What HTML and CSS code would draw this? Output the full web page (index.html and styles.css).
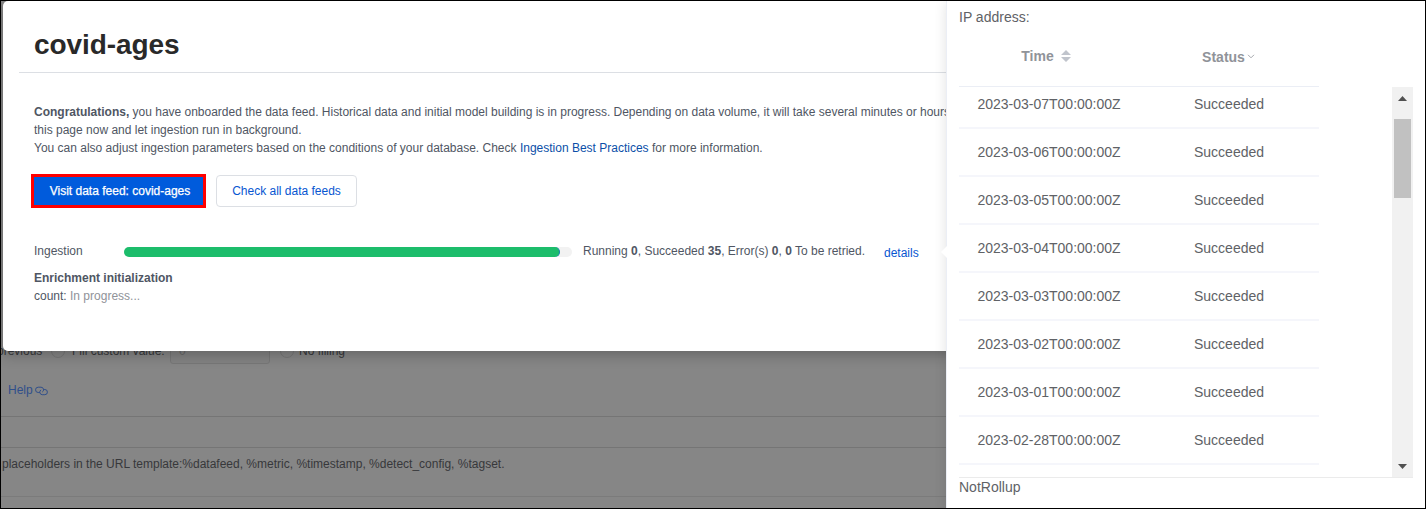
FILE: index.html
```html
<!DOCTYPE html>
<html lang="en">
<head>
<meta charset="utf-8">
<title>covid-ages</title>
<link rel="stylesheet" href="styles.css">
</head>
<body>
<div class="app">
  <main class="page">
    <div class="fill-row">
      <span class="previous">previous</span>
      <span class="radio"></span>
      <span class="fill-label">Fill custom value:</span>
      <span class="fill-input">0</span>
      <span class="radio"></span>
      <span class="no-fill">No filling</span>
    </div>
    <a class="help"><span>Help</span>
      <svg width="13" height="10" viewBox="0 0 13 10" fill="none" stroke="currentColor" stroke-width="1"><path d="M4.800 6.500H3.200A2.600 2.600 0 0 1 3.200 1.200H6A2.600 2.600 0 0 1 7.200 6.100M8.600 3.500H9.800A2.600 2.600 0 0 1 9.800 8.700H7.200A2.600 2.600 0 0 1 6 3.900"/></svg>
    </a>
    <div class="section-gap"></div>
    <div class="hint"><span>placeholders in the URL template:%datafeed, %metric, %timestamp, %detect_config, %tagset.</span></div>
  </main>

  <section class="modal">
    <h1 class="title"><span>covid-ages</span></h1>
    <div class="content">
      <div class="message">
        <div class="line-a"><b>Congratulations,</b> you have onboarded the data feed. Historical data and initial model building is in progress. Depending on data volume, it will take several minutes or hours.</div>
        <div class="line-b">this page now and let ingestion run in background.</div>
        <div class="line-c">You can also adjust ingestion parameters based on the conditions of your database. Check <a>Ingestion Best Practices</a> for more information.</div>
      </div>
      <div class="actions">
        <button class="btn primary"><span>Visit data feed: covid-ages</span></button>
        <button class="btn"><span>Check all data feeds</span></button>
      </div>
      <div class="ingestion">
        <span class="ing-label">Ingestion</span>
        <div class="track"><div class="bar"></div></div>
        <span class="counts">Running <b>0</b>, Succeeded <b>35</b>, Error(s) <b>0</b>, <b>0</b> To be retried.</span>
        <a class="details">details</a>
      </div>
      <div class="enrich"><b>Enrichment initialization</b></div>
      <div class="count">count: <span>In progress...</span></div>
    </div>
  </section>

  <aside class="popover">
    <svg class="arrow" width="6" height="12" viewBox="0 0 6 12"><path d="M6 0L0 6l6 6z" fill="#fff"/></svg>
    <div class="ip">IP address:</div>
    <div class="thead">
      <div class="th"><span>Time</span><svg class="sort" width="10" height="12" viewBox="0 0 10 12" fill="#c0c4cc"><path d="M0 5l5-5 5 5zM0 7h10l-5 5z"/></svg></div>
      <div class="th status"><span>Status</span><svg width="8" height="5" viewBox="0 0 8 5" fill="none" stroke="#a5a8ad"><path d="M1 .8l3 3 3-3"/></svg></div>
    </div>
    <div class="viewport">
      <div class="rows">
        <div class="row"><span>2023-03-07T00:00:00Z</span><span>Succeeded</span></div>
        <div class="row"><span>2023-03-06T00:00:00Z</span><span>Succeeded</span></div>
        <div class="row"><span>2023-03-05T00:00:00Z</span><span>Succeeded</span></div>
        <div class="row"><span>2023-03-04T00:00:00Z</span><span>Succeeded</span></div>
        <div class="row"><span>2023-03-03T00:00:00Z</span><span>Succeeded</span></div>
        <div class="row"><span>2023-03-02T00:00:00Z</span><span>Succeeded</span></div>
        <div class="row"><span>2023-03-01T00:00:00Z</span><span>Succeeded</span></div>
        <div class="row"><span>2023-02-28T00:00:00Z</span><span>Succeeded</span></div>
      </div>
      <div class="scrollbar">
        <svg width="9" height="5" viewBox="0 0 9 5"><path d="M0 5l4.500-5L9 5z" fill="#505050"/></svg>
        <div class="thumb"></div>
        <svg class="down" width="9" height="5" viewBox="0 0 9 5"><path d="M0 0h9L4.500 5z" fill="#505050"/></svg>
      </div>
    </div>
    <div class="rollup">NotRollup</div>
  </aside>
</div>
</body>
</html>
```
FILE: styles.css
```css
* { box-sizing: border-box; }
body { margin: 0; font: 12px/18px "Liberation Sans", Arial, sans-serif; color: #4f5663; }
.app { position: relative; width: 1426px; height: 509px; border: 1px solid #000; overflow: hidden; background: #868686; }
.page { color: #37383b; padding-top: 336px; width: 946px; white-space: nowrap; }
.fill-row { display: flex; align-items: center; height: 27px; }
.previous { width: 43px; margin-left: -4px; margin-right: 11px; }
.radio { width: 14px; height: 14px; border: 1px solid #777; border-radius: 50%; flex: none; }
.fill-label { width: 98px; margin-left: 7px; }
.fill-input { width: 100px; height: 27px; border: 1px solid #777; border-radius: 3px; padding: 4px 8px; color: #686868; margin-right: 10px; background: #838383; }
.no-fill { margin-left: 5px; }
.help { display: flex; align-items: center; gap: 2px; height: 18px; margin: 17px 0 0 7px; color: #304f8b; }
.help svg { margin-top: 2px; }
.section-gap { height: 32px; margin-top: 17px; border: solid #757575; border-width: 1px 0; }
.hint { height: 49px; padding: 7px 0 0 1px; border-bottom: 1px solid #7b7b7b; }

.modal { position: absolute; left: 2px; top: 0; width: 1100px; height: 350px; background: #fff; border-radius: 5px; box-shadow: 0 4px 14px rgba(0,0,0,.25); white-space: nowrap; }
.title { margin: 0 0 0 16px; height: 72px; padding: 28px 0 0 15px; font-size: 28px; line-height: 32px; letter-spacing: -.08px; color: #292929; border-bottom: 1px solid #dcdfe4; }
.content { padding: 30px 0 0 31px; }
.modal a { color: #0756d1; }
.message a { color: #0b4fa8; }
.line-a { letter-spacing: -.007px; }
.actions { display: flex; align-items: center; gap: 10px; margin: 17px 0 0 -3px; }
.btn { height: 32px; width: 141px; background: #fff; border: 1px solid #dcdfe4; border-radius: 4px; font: inherit; color: #0756d1; padding: 0; }
.primary { width: 175px; height: 34px; border: 3px solid #f00; border-radius: 0; background: #005bdc; color: #fff; padding-left: 3px; -webkit-text-stroke: .25px #fff; }
.ingestion { display: flex; align-items: center; height: 18px; margin-top: 34px; }
.ing-label { width: 90px; }
.track { width: 448px; height: 10px; border-radius: 5px; background: #f2f2f2; margin-top: 2px; }
.bar { width: 436px; height: 10px; border-radius: 5px; background: #1cbd6b; border-right: 1px solid #187fb1; }
.counts { width: 301px; margin-left: 11px; }
.details { padding-top: 3px; }
.enrich { margin-top: 9px; }
.count span { color: #909399; }

.popover { position: absolute; left: 945px; top: 0; width: 479px; height: 507px; background: #fff; border-left: 1px solid #ebeef5; box-shadow: 0 2px 12px rgba(0,0,0,.12); padding: 6px 12px 0; font-size: 14px; line-height: 20px; color: #606266; white-space: nowrap; }
.arrow { position: absolute; left: -6px; top: 245px; }
.thead { display: flex; width: 360px; height: 60px; border-bottom: 1px solid #ebeef5; font-weight: bold; color: #909399; }
.th { width: 180px; display: flex; justify-content: center; align-items: center; gap: 7px; height: 59px; }
.th:first-child { padding: 0 6px 2px 0; }
.status { gap: 2px; padding: 0 1px 0 0; }
.viewport { display: flex; justify-content: space-between; width: 454px; height: 391px; border-bottom: 1px solid #ebebeb; overflow: hidden; }
.rows { width: 360px; margin-top: -6px; }
.row { display: grid; grid-template-columns: 1fr 1fr; height: 48px; align-items: center; text-align: center; border-bottom: 2px solid #f5f6fb; }
.scrollbar { width: 21px; height: 390px; background: #f1f1f1; display: flex; flex-direction: column; align-items: center; padding: 9px 0 8px; }
.thumb { width: 17px; height: 79px; background: #c1c1c1; margin-top: 18px; }
.down { margin-top: auto; }
.rollup { margin-top: -1px; }
```
